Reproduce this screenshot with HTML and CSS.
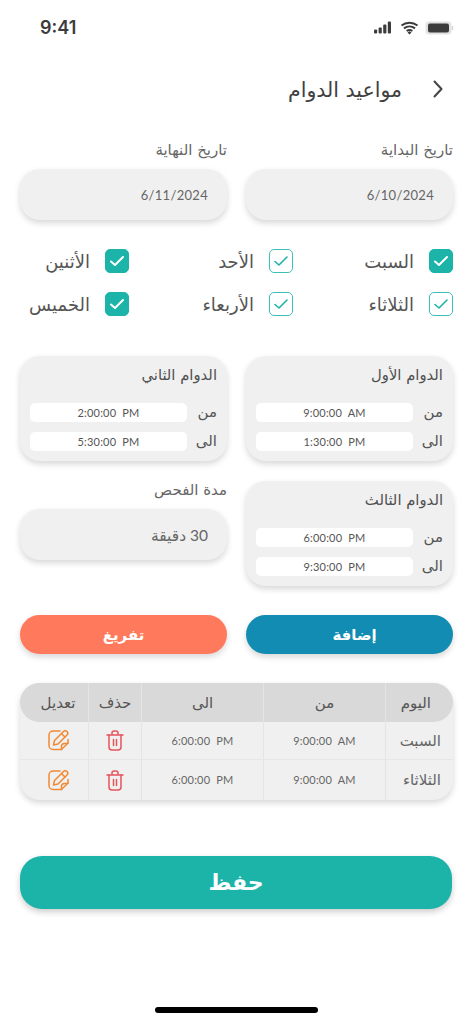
FILE: index.html
```html
<!DOCTYPE html>
<html lang="ar" dir="rtl">
<head>
<meta charset="utf-8">
<title>مواعيد الدوام</title>
<link rel="stylesheet" href="styles.css">
</head>
<body>
<div class="screen">
  <div class="status" dir="ltr">
    <span class="clock">9:41</span>
    <svg class="status-icons" width="80" height="16" viewBox="0 0 80 16">
      <g fill="#3c3c3c">
        <rect x="0" y="9.5" width="3.2" height="4" rx="1"/>
        <rect x="4.6" y="7.5" width="3.2" height="6" rx="1"/>
        <rect x="9.2" y="4.5" width="3.2" height="9" rx="1"/>
        <rect x="13.8" y="1.5" width="3.2" height="12" rx="1"/>
      </g>
      <path d="M27.5 5.5a13 13 0 0 1 16 0M30 8.4a9 9 0 0 1 11 0M32.6 11a5 5 0 0 1 5.8 0" fill="none" stroke="#3c3c3c" stroke-width="2"/>
      <path d="M33.5 12.5l2-1.2 2 1.2-2 2z" fill="#3c3c3c"/>
      <rect x="51.5" y="1.5" width="26" height="13" rx="4" fill="#e2e2e2"/>
      <rect x="54" y="3.5" width="21" height="9" rx="2" fill="#3c3c3c"/>
      <rect x="78" y="6" width="1.2" height="4" rx=".6" fill="#d0d0d0"/>
    </svg>
  </div>

  <header class="title-bar">
    <svg class="chevron" width="10" height="18" viewBox="0 0 10 18"><path d="M1.500 1.500L8.500 9L1.500 16.500" fill="none" stroke="#444" stroke-width="2" stroke-linecap="round" stroke-linejoin="round"/></svg>
    <h1 class="title">مواعيد الدوام</h1>
  </header>

  <section class="two-col dates">
    <div class="field">
      <label class="field-label">تاريخ البداية</label>
      <div class="input"><span dir="ltr">6/10/2024</span></div>
    </div>
    <div class="field">
      <label class="field-label">تاريخ النهاية</label>
      <div class="input"><span dir="ltr">6/11/2024</span></div>
    </div>
  </section>

  <section class="days">
    <div class="day"><span class="box on"><svg width="16" height="12" viewBox="0 0 16 12"><path d="M2 6.500L6 10L14 2" fill="none" stroke="#fff" stroke-width="2" stroke-linecap="round" stroke-linejoin="round"/></svg></span>السبت</div>
    <div class="day"><span class="box"><svg width="16" height="12" viewBox="0 0 16 12"><path d="M2 6.500L6 10L14 2" fill="none" stroke="#1cb3a9" stroke-width="1.600" stroke-linecap="round" stroke-linejoin="round"/></svg></span>الأحد</div>
    <div class="day"><span class="box on"><svg width="16" height="12" viewBox="0 0 16 12"><path d="M2 6.500L6 10L14 2" fill="none" stroke="#fff" stroke-width="2" stroke-linecap="round" stroke-linejoin="round"/></svg></span>الأثنين</div>
    <div class="day"><span class="box"><svg width="16" height="12" viewBox="0 0 16 12"><path d="M2 6.500L6 10L14 2" fill="none" stroke="#1cb3a9" stroke-width="1.600" stroke-linecap="round" stroke-linejoin="round"/></svg></span>الثلاثاء</div>
    <div class="day"><span class="box"><svg width="16" height="12" viewBox="0 0 16 12"><path d="M2 6.500L6 10L14 2" fill="none" stroke="#1cb3a9" stroke-width="1.600" stroke-linecap="round" stroke-linejoin="round"/></svg></span>الأربعاء</div>
    <div class="day"><span class="box on"><svg width="16" height="12" viewBox="0 0 16 12"><path d="M2 6.500L6 10L14 2" fill="none" stroke="#fff" stroke-width="2" stroke-linecap="round" stroke-linejoin="round"/></svg></span>الخميس</div>
  </section>

  <section class="two-col shifts">
    <div class="card">
      <h2 class="card-title">الدوام الأول</h2>
      <div class="time-row"><span class="time-label">من</span><span class="time" dir="ltr">9:00:00&nbsp; AM</span></div>
      <div class="time-row"><span class="time-label">الى</span><span class="time" dir="ltr">1:30:00&nbsp; PM</span></div>
    </div>
    <div class="card">
      <h2 class="card-title">الدوام الثاني</h2>
      <div class="time-row"><span class="time-label">من</span><span class="time" dir="ltr">2:00:00&nbsp; PM</span></div>
      <div class="time-row"><span class="time-label">الى</span><span class="time" dir="ltr">5:30:00&nbsp; PM</span></div>
    </div>
    <div class="card">
      <h2 class="card-title">الدوام الثالث</h2>
      <div class="time-row"><span class="time-label">من</span><span class="time" dir="ltr">6:00:00&nbsp; PM</span></div>
      <div class="time-row"><span class="time-label">الى</span><span class="time" dir="ltr">9:30:00&nbsp; PM</span></div>
    </div>
    <div class="field duration">
      <label class="field-label">مدة الفحص</label>
      <div class="input input-text">30 دقيقة</div>
    </div>
  </section>

  <section class="two-col actions">
    <button class="btn add">إضافة</button>
    <button class="btn clear">تفريغ</button>
  </section>

  <section class="table">
    <div class="thead">
      <div class="th">اليوم</div><div class="th">من</div><div class="th">الى</div><div class="th">حذف</div><div class="th">تعديل</div>
    </div>
    <div class="tr">
      <div class="td day-cell">السبت</div>
      <div class="td num" dir="ltr">9:00:00&nbsp; AM</div>
      <div class="td num" dir="ltr">6:00:00&nbsp; PM</div>
      <div class="td"><svg width="18" height="21" viewBox="0 0 18 21"><g fill="none" stroke="#e4545c" stroke-width="1.500" stroke-linecap="round" stroke-linejoin="round"><path d="M1 5h16M6 5V3a2 2 0 0 1 2-2h2a2 2 0 0 1 2 2v2"/><path d="M3 5v12a3 3 0 0 0 3 3h6a3 3 0 0 0 3-3V5"/><path d="M7.500 9.500v6M10.500 9.500v6"/></g></svg></div>
      <div class="td"><svg width="21" height="21" viewBox="0 0 21 21"><g fill="none" stroke="#f08a34" stroke-width="1.500" stroke-linecap="round" stroke-linejoin="round"><path d="M12 1H5a4 4 0 0 0-4 4v10.500a4 4 0 0 0 4 4h8.500l6.500-6.500V9.500"/><path d="M13.500 19.500v-3a3 3 0 0 1 3-3H20"/><path d="M5.500 15l1-4.500L15.500 1.500a2.200 2.200 0 0 1 3.500 3.500L10 14z"/><path d="M13.500 3.500l3.500 3.500"/></g></svg></div>
    </div>
    <div class="tr last">
      <div class="td day-cell">الثلاثاء</div>
      <div class="td num" dir="ltr">9:00:00&nbsp; AM</div>
      <div class="td num" dir="ltr">6:00:00&nbsp; PM</div>
      <div class="td"><svg width="18" height="21" viewBox="0 0 18 21"><g fill="none" stroke="#e4545c" stroke-width="1.500" stroke-linecap="round" stroke-linejoin="round"><path d="M1 5h16M6 5V3a2 2 0 0 1 2-2h2a2 2 0 0 1 2 2v2"/><path d="M3 5v12a3 3 0 0 0 3 3h6a3 3 0 0 0 3-3V5"/><path d="M7.500 9.500v6M10.500 9.500v6"/></g></svg></div>
      <div class="td"><svg width="21" height="21" viewBox="0 0 21 21"><g fill="none" stroke="#f08a34" stroke-width="1.500" stroke-linecap="round" stroke-linejoin="round"><path d="M12 1H5a4 4 0 0 0-4 4v10.500a4 4 0 0 0 4 4h8.500l6.500-6.500V9.500"/><path d="M13.500 19.500v-3a3 3 0 0 1 3-3H20"/><path d="M5.500 15l1-4.500L15.500 1.500a2.200 2.200 0 0 1 3.500 3.500L10 14z"/><path d="M13.500 3.500l3.500 3.500"/></g></svg></div>
    </div>
  </section>

  <button class="save">حفظ</button>

  <div class="home-bar"></div>
</div>
</body>
</html>
```
FILE: styles.css
```css
* { box-sizing: border-box; }
html, body { margin: 0; padding: 0; background: #fff; }
body { font-family: "DejaVu Sans", "Noto Sans", sans-serif; color: #4a4a4a; }
.screen { width: 473px; height: 1024px; padding: 0 20px; overflow: hidden; }

.status { height: 56px; margin: 0 -20px; padding: 18px 19px 0 40px; display: flex; justify-content: space-between; align-items: flex-start; }
.clock { font: 600 18px/20px Inter, sans-serif; color: #3c3c3c; }
.status-icons { margin-top: 2px; }

.title-bar { height: 34px; margin-top: 17px; padding-right: 10px; display: flex; align-items: center; gap: 31px; }
.chevron { margin-top: -3px; }
.title { margin: 0; font-size: 20.500px; font-weight: 400; color: #3f3f3f; line-height: 24px; }

.two-col { display: grid; grid-template-columns: 207px 207px; column-gap: 19px; }
.dates { margin-top: 35px; }
.field { display: flex; flex-direction: column; }
.duration { margin-top: 1px; }
.field-label { height: 27px; font-size: 15px; line-height: 16px; color: #666; }
.input { height: 51px; border-radius: 20px; background: #f0f0f0; box-shadow: 0 3px 6px rgba(0,0,0,.16); padding: 0 19px; display: flex; align-items: center; font: 13px/18px Lato, "DejaVu Sans", sans-serif; letter-spacing: .3px; color: #666; }
.input-text { font-size: 15.500px; letter-spacing: 0; }

.days { margin-top: 29px; display: grid; grid-template-columns: 160px 164px auto; row-gap: 19px; }
.day { display: flex; align-items: center; gap: 15px; height: 24px; font-size: 18px; color: #555; white-space: nowrap; }
.box { width: 24px; height: 24px; flex: none; border: 1.500px solid #3cc0b8; border-radius: 5px; background: #fff; display: flex; align-items: center; justify-content: center; }
.box.on { background: #1cb3a9; border-color: #1cb3a9; }

.shifts { margin-top: 40px; row-gap: 20px; align-items: start; }
.card { height: 105px; border-radius: 20px; background: #f0f0f0; box-shadow: 0 3px 6px rgba(0,0,0,.16); padding: 9px 10px 0; }
.card-title { margin: 0 0 11px; height: 27px; font-size: 14.800px; line-height: 20px; font-weight: 400; color: #4f4f4f; }
.time-row { display: flex; align-items: center; gap: 10px; height: 19px; margin-bottom: 10px; }
.time-label { width: 20px; flex: none; font-size: 15px; line-height: 19px; color: #555; white-space: nowrap; }
.time { flex: 1; height: 19px; border-radius: 5px; background: #fff; text-align: center; font: 11px/19px Lato, sans-serif; letter-spacing: .2px; color: #555; }

.actions { margin-top: 29px; }
.btn { height: 39px; border: 0; border-radius: 20px; color: #fff; font: 700 15px/20px "DejaVu Sans", sans-serif; box-shadow: 0 3px 6px rgba(0,0,0,.16); padding: 0; }
.add { background: #128cb2; padding-left: 10px; }
.clear { background: #ff7a5c; }

.table { margin-top: 29px; width: 433px; height: 117px; border-radius: 20px; background: #f0f0f0; box-shadow: 0 3px 6px rgba(0,0,0,.16); }
.thead, .tr { display: grid; grid-template-columns: 68px 122px 122px 53px 68px; }
.thead { height: 39px; background: #d9d9d9; border-radius: 20px; }
.tr { height: 38px; border-bottom: 1px solid #e6e6e6; }
.tr.last { height: 40px; border-bottom: 0; }
.th, .td { display: flex; align-items: center; justify-content: center; border-left: 1px solid #e4e4e4; }
.th:last-child, .td:last-child { border-left: 0; padding-left: 8px; }
.th { font-size: 15px; color: #555; }
.td { font-size: 15px; color: #666; }
.th:first-child { justify-content: flex-start; padding-right: 22px; }
.day-cell { justify-content: flex-start; padding-right: 12px; }
.num { font: 11px/16px Lato, sans-serif; letter-spacing: .2px; color: #666; }

.save { display: block; margin: 56px 1px 0 0; width: 432px; height: 53px; border: 0; border-radius: 22px; background: #1cb3a9; color: #fff; font: 700 22px/30px "DejaVu Sans", sans-serif; box-shadow: 0 3px 6px rgba(0,0,0,.2); padding: 0; }

.home-bar { width: 163px; height: 6px; margin: 98px auto 0; border-radius: 3px; background: #000; }
```
